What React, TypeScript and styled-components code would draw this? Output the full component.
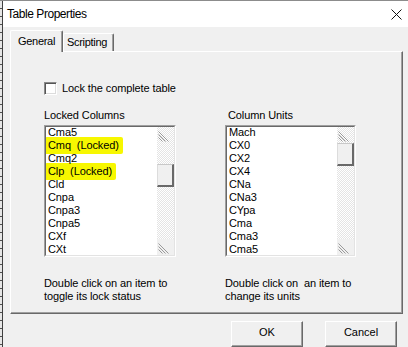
import React from "react";
import styled, { createGlobalStyle } from "styled-components";

const Global = createGlobalStyle`
  html, body { margin: 0; padding: 0; background: #f0f0f0; }
  body { font-family: "Liberation Sans", Arial, sans-serif; font-size: 11px; color: #000; letter-spacing: -0.1px; }
  #root { width: 408px; height: 347px; overflow: hidden; }
  * { box-sizing: border-box; }
`;

const Desktop = styled.div`
  display: flex;
  width: 408px;
  height: 347px;
  border-top: 1px solid #8c8c8c;
`;

const Edge = styled.div`
  width: 3px;
  flex: none;
  background:
    repeating-linear-gradient(to bottom, transparent 0 7px, #505050 7px 8px) 0 0 / 2px 100% no-repeat,
    linear-gradient(to right, #e6e6e6 0 2px, #404040 2px 3px);
`;

const Window = styled.div`
  flex: 1;
  display: flex;
  flex-direction: column;
  background: #f0f0f0;
  min-width: 0;
`;

const TitleBar = styled.div`
  height: 26px;
  flex: none;
  background: #fff;
  display: flex;
  align-items: center;
  justify-content: space-between;
  padding: 0 6px 0 4px;
`;

const Title = styled.span`
  font-family: "Liberation Sans", Arial, sans-serif;
  font-size: 12px;
  letter-spacing: -0.45px;
`;

const Main = styled.div`
  flex: 1;
  display: flex;
  flex-direction: column;
  padding: 3px 2px 0 7px;
`;

const TabRow = styled.div`
  display: flex;
  align-items: flex-end;
  height: 21px;
  position: relative;
  z-index: 1;
`;

const Tab = styled.div<{ $active?: boolean }>`
  height: ${(p) => (p.$active ? 22 : 18)}px;
  margin-bottom: ${(p) => (p.$active ? -1 : 0)}px;
  width: ${(p) => (p.$active ? 53 : 51)}px;
  background: #f0f0f0;
  border-top: 1px solid #fff;
  border-left: 1px solid #fff;
  border-right: 1px solid #696969;
  box-shadow: inset -1px 0 0 #a0a0a0;
  border-radius: 2px 2px 0 0;
  display: flex;
  align-items: ${(p) => (p.$active ? "flex-start" : "center")};
  padding: ${(p) => (p.$active ? "4px 0 0 7px" : "0 0 0 3px")};
  line-height: 13px;
  letter-spacing: -0.3px;
  white-space: nowrap;
`;

const Panel = styled.div`
  height: 263px;
  width: 393px;
  flex: none;
  border-top: 1px solid #fff;
  border-left: 1px solid #fff;
  border-right: 1px solid #696969;
  border-bottom: 1px solid #696969;
  box-shadow: inset -1px -1px 0 #a0a0a0;
  padding: 30px 0 0 33px;
  display: flex;
  flex-direction: column;
`;

const CheckRow = styled.label`
  display: flex;
  align-items: center;
  gap: 5px;
  height: 13px;
  line-height: 13px;
`;

const CheckBox = styled.span`
  width: 13px;
  height: 13px;
  background: #fff;
  border-top: 1px solid #8a8a8a;
  border-left: 1px solid #8a8a8a;
  border-right: 1px solid #fff;
  border-bottom: 1px solid #fff;
  box-shadow: inset 1px 1px 0 #555, inset -1px -1px 0 #dcdcdc;
`;

const Columns = styled.div`
  display: grid;
  grid-template-columns: 132px 131px;
  column-gap: 49px;
  margin-top: 14px;
`;

const Column = styled.div`
  display: flex;
  flex-direction: column;
`;

const Label = styled.div<{ $indent?: number }>`
  line-height: 13px;
  padding-left: ${(p) => p.$indent || 0}px;
  margin-bottom: 3px;
`;

const ListFrame = styled.div`
  height: 132px;
  border-top: 1px solid #a0a0a0;
  border-left: 1px solid #a0a0a0;
  border-right: 1px solid #fff;
  border-bottom: 1px solid #fff;
`;

const ListInner = styled.div`
  height: 100%;
  border-top: 1px solid #696969;
  border-left: 1px solid #696969;
  border-right: 1px solid #e3e3e3;
  border-bottom: 1px solid #e3e3e3;
  background: #fff;
  display: flex;
`;

const Items = styled.div`
  flex: 1;
  overflow: hidden;
  padding-left: 2px;
  margin-top: -1px;
`;

const Item = styled.div<{ $plain?: boolean }>`
  line-height: 13px;
  height: 13px;
  white-space: pre;
  position: ${(p) => (p.$plain ? "relative" : "static")};
`;

const Marked = styled.span`
  background: #f7f700;
  padding: 2px 4px 3px 3px;
  margin-left: -3px;
  border-radius: 2px;
`;

const ScrollBar = styled.div`
  width: 17px;
  flex: none;
  display: flex;
  flex-direction: column;
  background-color: #fff;
  background-image: conic-gradient(#e4e4e4 25%, transparent 0 50%, #e4e4e4 0 75%, transparent 0);
  background-size: 2px 2px;
`;

const ArrowBox = styled.div<{ $solid?: boolean }>`
  height: 16px;
  flex: none;
  background: ${(p) => (p.$solid ? "#f0f0f0" : "transparent")};
  display: flex;
  align-items: flex-end;
  padding: 0 0 1px 1px;
`;

const Track = styled.div`
  flex: 1;
`;

const Thumb = styled.div`
  width: 17px;
  height: 23px;
  background: #f0f0f0;
  border-top: 1px solid #c8c8c8;
  border-left: 1px solid #dcdcdc;
  border-right: 2px solid #696969;
  border-bottom: 2px solid #696969;
`;

const Note = styled.div`
  margin-top: 20px;
  line-height: 13px;
  white-space: pre;
`;

const ButtonRow = styled.div`
  display: flex;
  justify-content: flex-end;
  gap: 22px;
  margin: 7px 9px 0 0;
`;

const Button = styled.button`
  width: 72px;
  height: 26px;
  background: #f0f0f0;
  font: inherit;
  color: #000;
  border-top: 1px solid #fff;
  border-left: 1px solid #fff;
  border-right: 1px solid #696969;
  border-bottom: 1px solid #696969;
  box-shadow: inset -1px -1px 0 #a0a0a0;
  padding: 0 0 3px;
  line-height: 13px;
`;

const Grip = () => (
  <svg width="12" height="11" viewBox="0 0 12 11">
    <g stroke="#9a9a9a" strokeWidth="1">
      <line x1="0.5" y1="0.5" x2="10.5" y2="10.5" />
      <line x1="0.5" y1="3.5" x2="7.5" y2="10.5" />
      <line x1="0.5" y1="6.5" x2="4.5" y2="10.5" />
    </g>
  </svg>
);

const Close = () => (
  <svg width="11" height="11" viewBox="0 0 11 11">
    <path d="M0.5 0.5 L10.5 10.5 M10.5 0.5 L0.5 10.5" stroke="#111" strokeWidth="1" />
  </svg>
);

type Entry = { name: string; locked?: boolean };

const ListBox = ({ items, thumbTop }: { items: Entry[]; thumbTop: number }) => (
  <ListFrame>
    <ListInner>
      <Items>
        {items.map((it) => (
          <Item key={it.name} $plain={!it.locked}>
            {it.locked ? <Marked>{it.name + "  (Locked)"}</Marked> : it.name}
          </Item>
        ))}
      </Items>
      <ScrollBar>
        <ArrowBox>
          <Grip />
        </ArrowBox>
        <Track>
          <Thumb style={{ marginTop: thumbTop }} />
        </Track>
        <ArrowBox $solid>
          <Grip />
        </ArrowBox>
      </ScrollBar>
    </ListInner>
  </ListFrame>
);

const locked: Entry[] = [
  { name: "Cma5" },
  { name: "Cmq", locked: true },
  { name: "Cmq2" },
  { name: "Clp", locked: true },
  { name: "Cld" },
  { name: "Cnpa" },
  { name: "Cnpa3" },
  { name: "Cnpa5" },
  { name: "CXf" },
  { name: "CXt" },
];

const units: Entry[] = ["Mach", "CX0", "CX2", "CX4", "CNa", "CNa3", "CYpa", "Cma", "Cma3", "Cma5"].map((n) => ({ name: n }));

export default function App() {
  return (
    <>
      <Global />
      <Desktop>
        <Edge />
        <Window>
          <TitleBar>
            <Title>Table Properties</Title>
            <Close />
          </TitleBar>
          <Main>
            <TabRow>
              <Tab $active>General</Tab>
              <Tab>Scripting</Tab>
            </TabRow>
            <Panel>
              <CheckRow>
                <CheckBox />
                Lock the complete table
              </CheckRow>
              <Columns>
                <Column>
                  <Label>Locked Columns</Label>
                  <ListBox items={locked} thumbTop={21} />
                  <Note>{"Double click on an item to\ntoggle its lock status"}</Note>
                </Column>
                <Column>
                  <Label $indent={3}>Column Units</Label>
                  <ListBox items={units} thumbTop={0} />
                  <Note>{"Double click on  an item to\nchange its units"}</Note>
                </Column>
              </Columns>
            </Panel>
            <ButtonRow>
              <Button>OK</Button>
              <Button>Cancel</Button>
            </ButtonRow>
          </Main>
        </Window>
      </Desktop>
    </>
  );
}
